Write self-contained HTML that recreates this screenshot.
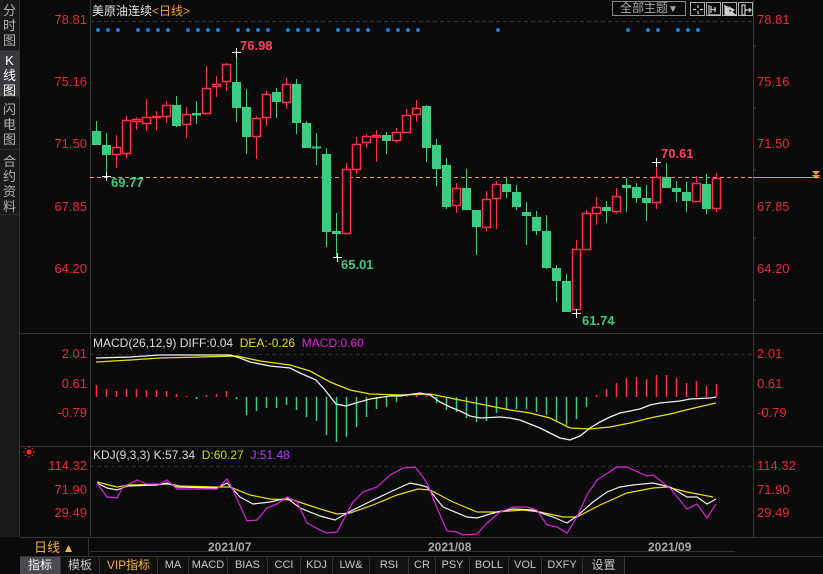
<!DOCTYPE html>
<html><head><meta charset="utf-8"><style>
*{margin:0;padding:0;box-sizing:border-box}
body{width:823px;height:574px;background:#0a0a0a;overflow:hidden;position:relative;font-family:"Liberation Sans","Noto Sans CJK SC",sans-serif;}
.abs{position:absolute;white-space:nowrap}
.side{position:absolute;left:0;top:0;width:20px;height:537px;background:#1a1a1c;border-right:1px solid #333}
.tab{position:absolute;left:0;width:19px;color:#b0b0b0;font-size:13px;line-height:15px;text-align:center;border-bottom:1px solid #2c2c2c}
.lab{position:absolute;font-size:13px;color:#e8283f;text-align:right}
.rl{position:absolute;left:757px;font-size:13px;color:#e8283f}
.tb{position:absolute;top:557px;height:17px;font-size:11px;line-height:17px;color:#c8c8c8;text-align:center;border-right:1px solid #333;background:#111}
.btn{position:absolute;top:2px;width:15px;height:14px;border:1px solid #aaa}
</style></head><body>
<div class="side">
<div class="tab" style="top:3px;height:48px">分<br>时<br>图</div>
<div class="tab" style="top:51px;height:46px;background:#3a3a3e;color:#fff;padding-top:2px">K<br>线<br>图</div>
<div class="tab" style="top:98px;height:52px;padding-top:4px">闪<br>电<br>图</div>
<div class="tab" style="top:151px;height:64px;padding-top:3px">合<br>约<br>资<br>料</div>
</div>

<div class="abs" style="left:34px;top:540px;font-size:13px;line-height:16px;color:#f0b040">日线</div>

<svg class="abs" style="left:0;top:0" width="823" height="574">
<line x1="90.5" y1="0" x2="90.5" y2="537" stroke="#333"/>
<line x1="753.5" y1="0" x2="753.5" y2="537" stroke="#333"/>
<line x1="20" y1="333.5" x2="823" y2="333.5" stroke="#333"/>
<line x1="20" y1="446.5" x2="823" y2="446.5" stroke="#333"/>
<line x1="20" y1="537.5" x2="823" y2="537.5" stroke="#333"/>
<line x1="20" y1="556.5" x2="823" y2="556.5" stroke="#333"/>
<line x1="90" y1="21.5" x2="753" y2="21.5" stroke="#333" stroke-dasharray="4 3"/>
<line x1="90" y1="354.5" x2="753" y2="354.5" stroke="#2a2a2a" stroke-dasharray="4 3"/>
<line x1="90" y1="466.5" x2="753" y2="466.5" stroke="#2a2a2a" stroke-dasharray="4 3"/>
<line x1="90" y1="551.5" x2="735" y2="551.5" stroke="#333"/>
<line x1="88.5" y1="537" x2="88.5" y2="557" stroke="#333"/>
<g stroke="#444"><line x1="753" y1="46" x2="756" y2="46"/><line x1="753" y1="108" x2="756" y2="108"/><line x1="753" y1="170" x2="756" y2="170"/><line x1="753" y1="238" x2="756" y2="238"/><line x1="753" y1="300" x2="756" y2="300"/></g>
<g fill="#1c7fd6">
<circle cx="98" cy="30" r="2"/><circle cx="108" cy="30" r="2"/><circle cx="118" cy="30" r="2"/><circle cx="138" cy="30" r="2"/><circle cx="148" cy="30" r="2"/><circle cx="158" cy="30" r="2"/><circle cx="168" cy="30" r="2"/><circle cx="188" cy="30" r="2"/><circle cx="198" cy="30" r="2"/><circle cx="208" cy="30" r="2"/><circle cx="218" cy="30" r="2"/><circle cx="238" cy="30" r="2"/><circle cx="248" cy="30" r="2"/><circle cx="258" cy="30" r="2"/><circle cx="268" cy="30" r="2"/><circle cx="288" cy="30" r="2"/><circle cx="298" cy="30" r="2"/><circle cx="308" cy="30" r="2"/><circle cx="318" cy="30" r="2"/><circle cx="338" cy="30" r="2"/><circle cx="348" cy="30" r="2"/><circle cx="358" cy="30" r="2"/><circle cx="368" cy="30" r="2"/><circle cx="388" cy="30" r="2"/><circle cx="398" cy="30" r="2"/><circle cx="408" cy="30" r="2"/><circle cx="418" cy="30" r="2"/><circle cx="498" cy="30" r="2"/><circle cx="628" cy="30" r="2"/><circle cx="648" cy="30" r="2"/><circle cx="658" cy="30" r="2"/><circle cx="678" cy="30" r="2"/><circle cx="688" cy="30" r="2"/><circle cx="698" cy="30" r="2"/>
</g>
<line x1="90" y1="177.5" x2="753" y2="177.5" stroke="#e89a3c" stroke-dasharray="4 3"/>
<line x1="753" y1="177.5" x2="820" y2="177.5" stroke="#e89a3c"/>
<path d="M812 171h8l-4 4z M812 175h8l-4 4z" fill="#f0a030"/>
<g stroke="#3ccb82" fill="#3ccb82">
<line x1="96.5" y1="121" x2="96.5" y2="145"/><rect x="92.5" y="131.5" width="8" height="13"/>
<line x1="106.5" y1="133" x2="106.5" y2="176"/><rect x="102.5" y="145.5" width="8" height="9"/>
<line x1="176.5" y1="96" x2="176.5" y2="127"/><rect x="172.5" y="105.5" width="8" height="20"/>
<line x1="196.5" y1="101" x2="196.5" y2="124"/><rect x="192.5" y="113.5" width="8" height="1.5"/>
<line x1="236.5" y1="52" x2="236.5" y2="122"/><rect x="232.5" y="82.5" width="8" height="25"/>
<line x1="246.5" y1="89" x2="246.5" y2="154"/><rect x="242.5" y="107.5" width="8" height="29"/>
<line x1="276.5" y1="88" x2="276.5" y2="118"/><rect x="272.5" y="92.5" width="8" height="9"/>
<line x1="296.5" y1="79" x2="296.5" y2="134"/><rect x="292.5" y="84.5" width="8" height="38"/>
<line x1="306.5" y1="121" x2="306.5" y2="148"/><rect x="302.5" y="123.5" width="8" height="24"/>
<line x1="316.5" y1="133" x2="316.5" y2="165"/><rect x="312.5" y="147" width="8" height="1"/>
<line x1="326.5" y1="148" x2="326.5" y2="247"/><rect x="322.5" y="154.5" width="8" height="77"/>
<line x1="336.5" y1="213" x2="336.5" y2="257"/><rect x="332.5" y="231.5" width="8" height="2"/>
<line x1="386.5" y1="132" x2="386.5" y2="154"/><rect x="382.5" y="135.5" width="8" height="5"/>
<line x1="426.5" y1="105" x2="426.5" y2="162"/><rect x="422.5" y="106.5" width="8" height="41"/>
<line x1="436.5" y1="139" x2="436.5" y2="186"/><rect x="432.5" y="145.5" width="8" height="23"/>
<line x1="446.5" y1="158" x2="446.5" y2="209"/><rect x="442.5" y="165.5" width="8" height="41"/>
<line x1="466.5" y1="169" x2="466.5" y2="210"/><rect x="462.5" y="188.5" width="8" height="21"/>
<line x1="476.5" y1="210" x2="476.5" y2="255"/><rect x="472.5" y="210.5" width="8" height="16"/>
<line x1="506.5" y1="178" x2="506.5" y2="198"/><rect x="502.5" y="184.5" width="8" height="7"/>
<line x1="516.5" y1="185" x2="516.5" y2="210"/><rect x="512.5" y="192.5" width="8" height="14"/>
<line x1="526.5" y1="202" x2="526.5" y2="245"/><rect x="522.5" y="212.5" width="8" height="3"/>
<line x1="536.5" y1="211" x2="536.5" y2="235"/><rect x="532.5" y="217.5" width="8" height="13"/>
<line x1="546.5" y1="215" x2="546.5" y2="269"/><rect x="542.5" y="231.5" width="8" height="36"/>
<line x1="556.5" y1="265" x2="556.5" y2="302"/><rect x="552.5" y="268.5" width="8" height="12"/>
<line x1="566.5" y1="274" x2="566.5" y2="312"/><rect x="562.5" y="281.5" width="8" height="30"/>
<line x1="606.5" y1="201" x2="606.5" y2="223"/><rect x="602.5" y="207.5" width="8" height="3"/>
<line x1="626.5" y1="178" x2="626.5" y2="212"/><rect x="622.5" y="185.5" width="8" height="2"/>
<line x1="636.5" y1="183" x2="636.5" y2="203"/><rect x="632.5" y="187.5" width="8" height="10"/>
<line x1="646.5" y1="185" x2="646.5" y2="221"/><rect x="642.5" y="198.5" width="8" height="4"/>
<line x1="666.5" y1="163" x2="666.5" y2="188"/><rect x="662.5" y="177.5" width="8" height="10"/>
<line x1="676.5" y1="181" x2="676.5" y2="202"/><rect x="672.5" y="188.5" width="8" height="3"/>
<line x1="686.5" y1="182" x2="686.5" y2="212"/><rect x="682.5" y="192.5" width="8" height="8"/>
<line x1="706.5" y1="174" x2="706.5" y2="214"/><rect x="702.5" y="184.5" width="8" height="24"/>
</g>
<g stroke="#ff2d4d" fill="#0a0a0a" stroke-width="1.5">
<g stroke-width="1">
<line x1="116.5" y1="135" x2="116.5" y2="168"/><line x1="126.5" y1="116" x2="126.5" y2="158"/><line x1="136.5" y1="117" x2="136.5" y2="130"/><line x1="146.5" y1="99" x2="146.5" y2="131"/><line x1="156.5" y1="111" x2="156.5" y2="130"/><line x1="166.5" y1="101" x2="166.5" y2="123"/><line x1="186.5" y1="107" x2="186.5" y2="138"/><line x1="206.5" y1="66" x2="206.5" y2="114"/><line x1="216.5" y1="76" x2="216.5" y2="97"/><line x1="226.5" y1="63" x2="226.5" y2="91"/><line x1="256.5" y1="116" x2="256.5" y2="159"/><line x1="266.5" y1="91" x2="266.5" y2="126"/><line x1="286.5" y1="78" x2="286.5" y2="109"/><line x1="346.5" y1="163" x2="346.5" y2="233"/><line x1="356.5" y1="137" x2="356.5" y2="174"/><line x1="366.5" y1="134" x2="366.5" y2="148"/><line x1="376.5" y1="130" x2="376.5" y2="162"/><line x1="396.5" y1="128" x2="396.5" y2="143"/><line x1="406.5" y1="109" x2="406.5" y2="133"/><line x1="416.5" y1="100" x2="416.5" y2="122"/><line x1="456.5" y1="183" x2="456.5" y2="213"/><line x1="486.5" y1="191" x2="486.5" y2="231"/><line x1="496.5" y1="181" x2="496.5" y2="229"/><line x1="576.5" y1="240" x2="576.5" y2="313"/><line x1="586.5" y1="210" x2="586.5" y2="250"/><line x1="596.5" y1="197" x2="596.5" y2="225"/><line x1="616.5" y1="188" x2="616.5" y2="214"/><line x1="656.5" y1="162" x2="656.5" y2="209"/><line x1="696.5" y1="176" x2="696.5" y2="201"/><line x1="716.5" y1="173" x2="716.5" y2="212"/>
</g>
<rect x="112.5" y="147.5" width="8" height="7"/><rect x="122.5" y="120.5" width="8" height="33"/><rect x="132.5" y="119.5" width="8" height="2"/><rect x="142.5" y="117.5" width="8" height="6"/><rect x="152.5" y="116.5" width="8" height="1"/><rect x="162.5" y="105.5" width="8" height="11"/><rect x="182.5" y="114.5" width="8" height="10"/><rect x="202.5" y="88.5" width="8" height="25"/><rect x="212.5" y="84.5" width="8" height="2"/><rect x="222.5" y="64.5" width="8" height="17"/><rect x="252.5" y="118.5" width="8" height="18"/><rect x="262.5" y="94.5" width="8" height="23"/><rect x="282.5" y="84.5" width="8" height="18"/><rect x="342.5" y="169.5" width="8" height="64"/><rect x="352.5" y="144.5" width="8" height="25"/><rect x="362.5" y="136.5" width="8" height="6"/><rect x="372.5" y="135.5" width="8" height="1.5"/><rect x="392.5" y="132.5" width="8" height="8"/><rect x="402.5" y="115.5" width="8" height="17"/><rect x="412.5" y="108.5" width="8" height="6"/><rect x="452.5" y="188.5" width="8" height="17"/><rect x="482.5" y="199.5" width="8" height="28"/><rect x="492.5" y="184.5" width="8" height="14"/><rect x="572.5" y="249.5" width="8" height="60"/><rect x="582.5" y="213.5" width="8" height="36"/><rect x="592.5" y="207.5" width="8" height="6"/><rect x="612.5" y="196.5" width="8" height="15"/><rect x="652.5" y="177.5" width="8" height="25"/><rect x="692.5" y="183.5" width="8" height="18"/><rect x="712.5" y="178.5" width="8" height="30"/>
</g>
<g stroke="#fff" stroke-width="1"><path d="M232 52.5h9M236.5 48v9M102 176.5h9M106.5 172v9M333 257.5h9M337.5 253v9M572 313.5h9M576.5 309v9M652 162.5h9M656.5 158v9"/></g>
<g stroke="#ff2d4d" stroke-width="1.5">
<path d="M96.5 397v-12M106.5 397v-8M116.5 397v-6M126.5 397v-8M136.5 397v-8M146.5 397v-7M156.5 397v-7M166.5 397v-6M176.5 397v-3M186.5 397v-1M206.5 397v-2M216.5 397v-3M226.5 397v-6M406.5 397v-2M416.5 397v-4M426.5 397v-3M596.5 397v-2M606.5 397v-8M616.5 397v-14M626.5 397v-19M636.5 397v-20M646.5 397v-18M656.5 397v-22M666.5 397v-22M676.5 397v-19M686.5 397v-14M696.5 397v-16M706.5 397v-11M716.5 397v-13"/>
</g>
<g stroke="#3ccb82" stroke-width="1.5">
<path d="M196.5 397v2M236.5 397v2M246.5 397v18M256.5 397v14M266.5 397v11M276.5 397v11M286.5 397v8M296.5 397v13M306.5 397v20M316.5 397v24M326.5 397v38M336.5 397v45M346.5 397v40M356.5 397v30M366.5 397v20M376.5 397v12M386.5 397v10M396.5 397v5M436.5 397v6M446.5 397v13M456.5 397v15M466.5 397v21M476.5 397v25M486.5 397v24M496.5 397v16M506.5 397v12M516.5 397v12M526.5 397v12M536.5 397v15M546.5 397v18M556.5 397v24M566.5 397v28M576.5 397v22M586.5 397v10"/>
</g>
<polyline fill="none" stroke="#e8e000" stroke-width="1.3" points="96,362 130,360 160,358 200,357 237,356 260,361 290,365 310,371 330,382 350,390 370,394 400,395 430,394 450,398 470,402 490,406 510,410 530,413 550,418 570,428 590,429 610,427 630,423 650,418 670,414 690,409 716,403"/>
<polyline fill="none" stroke="#f0f0f0" stroke-width="1.3" points="96,358 130,357 160,355 200,355 230,355 240,358 250,362 270,366 290,368 300,373 316,380 325,390 336,404 346,406 356,403 370,399 390,396 400,396 420,393 430,395 440,402 450,407 460,411 470,416 480,418 500,417 510,418 520,420 530,424 540,428 550,433 560,438 570,440 580,436 590,428 600,422 610,417 620,413 630,411 640,409 650,405 660,403 670,402 680,401 690,399 710,398 716,397"/>
<polyline fill="none" stroke="#e8e000" stroke-width="1.2" points="97,482 117,487 130,485 170,484 180,486 217,487 230,487 250,495 270,499 293,500 317,508 337,514 350,513 373,505 397,495 418,489 430,490 453,502 477,512 497,512 523,510 540,512 563,517 577,517 600,505 627,493 653,488 667,487 687,492 713,497"/>
<polyline fill="none" stroke="#f0f0f0" stroke-width="1.2" points="97,483 107,488 117,490 127,486 157,485 167,483 177,487 217,488 227,483 240,497 253,504 270,502 287,498 300,508 320,516 335,520 347,513 363,505 390,492 410,483 420,485 427,487 443,507 467,517 477,518 497,512 513,509 533,510 553,517 567,523 577,516 593,502 607,492 620,487 633,485 653,483 670,487 687,497 697,497 707,504 716,499"/>
<polyline fill="none" stroke="#e020e0" stroke-width="1.2" points="97,483 107,497 117,498 123,487 137,480 147,484 160,484 167,480 177,489 217,489 227,479 233,490 247,521 257,520 267,508 277,504 287,497 297,502 307,523 320,530 327,533 337,532 353,502 363,492 377,487 390,475 403,468 415,467 420,473 427,483 437,508 447,531 457,532 463,535 477,534 487,523 500,512 513,507 527,507 537,510 547,525 557,527 567,533 577,517 587,495 597,480 617,467 627,467 647,476 653,475 670,488 687,509 697,504 707,518 716,504"/>
<circle cx="29" cy="452" r="2.5" fill="#ff2020"/>
<g stroke="#ff2020" stroke-width="1"><path d="M23 452h2M33 452h2M29 446v2M29 456v2M25 448l1 1M33 448l-1 1M25 456l1-1M33 456l-1-1"/></g>
<path d="M65 552l3.5-7 3.5 7z" fill="#f0b040"/>
</svg>

<div class="abs" style="left:92px;top:2px;font-size:12px;color:#e8e8e8">美原油连续<span style="color:#f0a030">&lt;日线&gt;</span></div>
<div class="abs" style="left:612px;top:1px;width:74px;height:15px;border:1px solid #888;color:#aaa;font-size:12px;line-height:13px;text-align:center">全部主题<span style="color:#aaa;font-size:10px">▼</span></div>
<div class="btn" style="left:690px"></div><div class="btn" style="left:706px"></div><div class="btn" style="left:722px"></div><div class="btn" style="left:738px"></div>
<svg class="abs" style="left:690px;top:2px" width="63" height="16" stroke="#ccc" fill="none" stroke-width="1.2">
<path d="M8 3v3M8 9v3M3 7.5h3M10 7.5h3"/>
<path d="M19 3v10h11M21 4v7M21 7.5h5M25 5v5"/>
<path d="M35 3v10h11M37 4v7M39 5l5 3-5 3z" fill="#ccc"/>
<path d="M52 3v10M52 3h3v10h-3M55 8h6M59 6l2 2-2 2"/>
</svg>

<div class="lab" style="left:30px;top:12px;width:57px">78.81</div>
<div class="lab" style="left:30px;top:74px;width:57px">75.16</div>
<div class="lab" style="left:30px;top:136px;width:57px">71.50</div>
<div class="lab" style="left:30px;top:199px;width:57px">67.85</div>
<div class="lab" style="left:30px;top:261px;width:57px">64.20</div>
<div class="rl" style="top:12px">78.81</div>
<div class="rl" style="top:74px">75.16</div>
<div class="rl" style="top:136px">71.50</div>
<div class="rl" style="top:199px">67.85</div>
<div class="rl" style="top:261px">64.20</div>
<div class="lab" style="left:30px;top:346px;width:57px">2.01</div>
<div class="lab" style="left:30px;top:376px;width:57px">0.61</div>
<div class="lab" style="left:30px;top:405px;width:57px">-0.79</div>
<div class="rl" style="top:346px">2.01</div>
<div class="rl" style="top:376px">0.61</div>
<div class="rl" style="top:405px">-0.79</div>
<div class="lab" style="left:20px;top:458px;width:67px">114.32</div>
<div class="lab" style="left:20px;top:482px;width:67px">71.90</div>
<div class="lab" style="left:20px;top:505px;width:67px">29.49</div>
<div class="rl" style="top:458px">114.32</div>
<div class="rl" style="top:482px">71.90</div>
<div class="rl" style="top:505px">29.49</div>

<div class="abs" style="left:240px;top:38px;font-size:13px;font-weight:bold;color:#ff4060">76.98</div>
<div class="abs" style="left:111px;top:175px;font-size:13px;font-weight:bold;color:#3ccb82">69.77</div>
<div class="abs" style="left:341px;top:257px;font-size:13px;font-weight:bold;color:#3ccb82">65.01</div>
<div class="abs" style="left:582px;top:313px;font-size:13px;font-weight:bold;color:#3ccb82">61.74</div>
<div class="abs" style="left:661px;top:146px;font-size:13px;font-weight:bold;color:#ff4060">70.61</div>

<div class="abs" style="left:93px;top:336px;font-size:12px;color:#ddd">MACD(26,12,9) DIFF:0.04 <span style="color:#e0e000">&nbsp;DEA:-0.26</span> <span style="color:#e020e0">&nbsp;MACD:0.60</span></div>
<div class="abs" style="left:93px;top:448px;font-size:12px;color:#ddd">KDJ(9,3,3) K:57.34 <span style="color:#c8e000">&nbsp;D:60.27</span> <span style="color:#b040ff">&nbsp;J:51.48</span></div>

<div class="abs" style="left:208px;top:540px;font-size:12px;font-weight:bold;color:#aaa">2021/07</div>
<div class="abs" style="left:428px;top:540px;font-size:12px;font-weight:bold;color:#aaa">2021/08</div>
<div class="abs" style="left:648px;top:540px;font-size:12px;font-weight:bold;color:#aaa">2021/09</div>

<div class="tb" style="left:20px;width:41px;background:#4a4a50;color:#fff;font-size:12px">指标</div>
<div class="tb" style="left:61px;width:39px;font-size:12px">模板</div>
<div class="tb" style="left:100px;width:58px;color:#f0b040;font-size:12px">VIP指标</div>
<div class="tb" style="left:158px;width:31px">MA</div>
<div class="tb" style="left:189px;width:39px">MACD</div>
<div class="tb" style="left:228px;width:40px">BIAS</div>
<div class="tb" style="left:268px;width:33px">CCI</div>
<div class="tb" style="left:301px;width:32px">KDJ</div>
<div class="tb" style="left:333px;width:37px">LW&amp;</div>
<div class="tb" style="left:370px;width:39px">RSI</div>
<div class="tb" style="left:409px;width:27px">CR</div>
<div class="tb" style="left:436px;width:34px">PSY</div>
<div class="tb" style="left:470px;width:39px">BOLL</div>
<div class="tb" style="left:509px;width:33px">VOL</div>
<div class="tb" style="left:542px;width:41px">DXFY</div>
<div class="tb" style="left:583px;width:42px;font-size:12px">设置</div>
<div class="abs" style="left:625px;top:557px;width:198px;height:17px;background:#0a0a0a"></div>
</body></html>
